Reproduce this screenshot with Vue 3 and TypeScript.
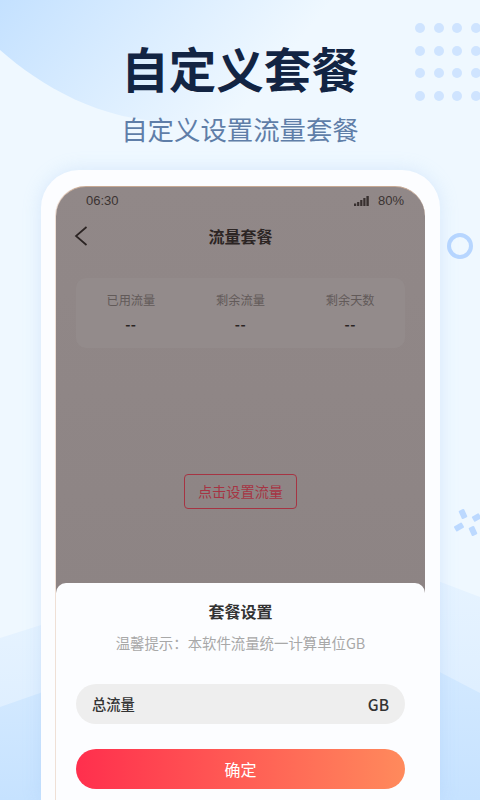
<script setup lang="ts">
const stats = [
  { label: '已用流量', value: '--' },
  { label: '剩余流量', value: '--' },
  { label: '剩余天数', value: '--' },
]
const dots = Array.from({ length: 16 }, (_, i) => i)
</script>

<template>
  <div class="page">
    <svg class="backdrop" width="480" height="800" viewBox="0 0 480 800" aria-hidden="true">
      <defs>
        <linearGradient id="arc" x1="0" y1="0" x2="1" y2="0.3">
          <stop offset="0" stop-color="#c4e1ff" />
          <stop offset="0.9" stop-color="#eff8ff" />
        </linearGradient>
        <linearGradient id="waveA" x1="0" y1="0" x2="0" y2="1">
          <stop offset="0" stop-color="#e6f3ff" />
          <stop offset="1" stop-color="#d8ebff" />
        </linearGradient>
        <linearGradient id="waveB" x1="0" y1="0" x2="0" y2="1">
          <stop offset="0" stop-color="#d3e9ff" />
          <stop offset="1" stop-color="#c6e2ff" />
        </linearGradient>
      </defs>
      <path d="M0 0 H340 C330 60 260 122 175 122 C100 122 40 85 0 50 Z" fill="url(#arc)" />
      <path d="M0 638 L60 619 V800 H0 Z" fill="url(#waveA)" />
      <path d="M0 707 L60 686 V800 H0 Z" fill="url(#waveB)" />
      <path d="M430 578 L480 597 V800 H430 Z" fill="url(#waveA)" />
      <path d="M430 667 L480 693 V800 H430 Z" fill="url(#waveB)" />
      <g fill="#bcd9ff">
        <rect x="-3" y="-4.5" width="6" height="9" rx="1" transform="translate(463 514) rotate(-25)" />
        <rect x="-4" y="-3" width="8" height="6" rx="1" transform="translate(476.500 517.500) rotate(-30)" />
        <rect x="-4.500" y="-3" width="9" height="6" rx="1" transform="translate(459 527) rotate(-30)" />
        <rect x="-3" y="-4.500" width="6" height="9" rx="1" transform="translate(473 531) rotate(-25)" />
      </g>
    </svg>

    <div class="dots" aria-hidden="true">
      <span v-for="d in dots" :key="d" class="dot"></span>
    </div>
    <span class="ring" aria-hidden="true"></span>

    <header class="hero">
      <h1 class="hero-title">自定义套餐</h1>
      <p class="hero-sub">自定义设置流量套餐</p>
    </header>

    <section class="frame">
      <div class="screen">
        <div class="statusbar">
          <span>06:30</span>
          <span class="status-right">
            <svg width="15" height="10" viewBox="0 0 15 10" aria-hidden="true">
              <g fill="#38302f">
                <rect x="0" y="7.5" width="2.2" height="2.5" />
                <rect x="3.1" y="6" width="2.2" height="4" />
                <rect x="6.2" y="4" width="2.2" height="6" />
                <rect x="9.3" y="2" width="2.2" height="8" />
                <rect x="12.4" y="0" width="2.4" height="10" />
              </g>
            </svg>
            <span>80%</span>
          </span>
        </div>

        <nav class="navbar">
          <svg class="back" width="14" height="20" viewBox="0 0 14 20" aria-hidden="true">
            <path d="M12.5 1 L2 10 L12.5 19" fill="none" stroke="#2b2423" stroke-width="1.7" />
          </svg>
          <span class="nav-title">流量套餐</span>
        </nav>

        <div class="stats">
          <div v-for="s in stats" :key="s.label" class="stat">
            <span class="stat-label">{{ s.label }}</span>
            <span class="stat-value">{{ s.value }}</span>
          </div>
        </div>

        <div class="action-wrap">
          <button class="action" type="button">点击设置流量</button>
        </div>

        <div class="sheet">
          <h2 class="sheet-title">套餐设置</h2>
          <p class="sheet-tip">温馨提示：本软件流量统一计算单位GB</p>
          <div class="field">
            <span class="field-label">总流量</span>
            <span class="unit">GB</span>
          </div>
          <button class="confirm" type="button">确定</button>
        </div>
      </div>
    </section>
  </div>
</template>

<style scoped>
.page {
  position: relative;
  width: 480px;
  height: 800px;
  overflow: hidden;
  background: #eff8ff;
  font-family: "Noto Sans CJK SC", "Noto Sans", sans-serif;
  display: flex;
  flex-direction: column;
  align-items: center;
}
.backdrop {
  position: absolute;
  left: 0;
  top: 0;
}
.dots {
  position: absolute;
  left: 415px;
  top: 23px;
  display: grid;
  grid-template-columns: repeat(4, 10px);
  column-gap: 8.7px;
  row-gap: 12.7px;
}
.dot {
  width: 10px;
  height: 10px;
  border-radius: 50%;
  background: #cfe4ff;
}
.ring {
  position: absolute;
  left: 447px;
  top: 233px;
  width: 26px;
  height: 26px;
  box-sizing: border-box;
  border: 4px solid #b7d6ff;
  border-radius: 50%;
}
.hero {
  position: relative;
  height: 170px;
  display: flex;
  flex-direction: column;
  align-items: center;
  flex: none;
}
.hero-title {
  margin: 34px 0 0;
  font-size: 47.5px;
  line-height: 68px;
  font-weight: 700;
  color: #122443;
}
.hero-sub {
  margin: 10px 0 0;
  font-size: 26.4px;
  line-height: 34px;
  font-weight: 400;
  color: #5f7ea8;
}
.frame {
  position: relative;
  flex: none;
  width: 399px;
  height: 630px;
  box-sizing: border-box;
  margin-left: 1px;
  padding: 16px 15px 0;
  background: #fcfdff;
  border-radius: 38px 38px 0 0;
  box-shadow: 0 0 18px rgba(150, 195, 240, 0.28);
}
.screen {
  height: 100%;
  display: flex;
  flex-direction: column;
  border-radius: 30px 30px 0 0;
  border-top: 1px solid #c7a994;
  box-sizing: border-box;
  box-shadow: -1px 0 0 #efe0d6;
  background: linear-gradient(180deg, #918888 0%, #8b8282 100%);
  overflow: hidden;
}
.statusbar {
  flex: none;
  height: 27px;
  padding: 0 21px 0 30px;
  display: flex;
  align-items: center;
  justify-content: space-between;
  font-family: "Liberation Sans", sans-serif;
  font-size: 13px;
  color: #3b3332;
}
.status-right {
  display: flex;
  align-items: center;
  gap: 9px;
}
.navbar {
  position: relative;
  flex: none;
  height: 46px;
  display: flex;
  align-items: center;
  justify-content: center;
}
.back {
  position: absolute;
  left: 18px;
  top: 12px;
}
.nav-title {
  margin-top: -2px;
  font-size: 16px;
  font-weight: 700;
  color: #2c2524;
}
.stats {
  flex: none;
  margin: 18px 20px 0;
  height: 70px;
  display: grid;
  grid-template-columns: repeat(3, 1fr);
  background: #938b8b;
  border-radius: 10px;
}
.stat {
  display: flex;
  flex-direction: column;
  align-items: center;
  padding-top: 12px;
}
.stat-label {
  font-size: 12.2px;
  line-height: 20px;
  color: #625a59;
}
.stat-value {
  margin-top: 4px;
  font-size: 14px;
  line-height: 20px;
  font-weight: 700;
  letter-spacing: 0.5px;
  color: #2a2423;
}
.action-wrap {
  flex: none;
  margin-top: 126px;
  display: flex;
  justify-content: center;
}
.action {
  width: 113px;
  height: 35px;
  padding: 0 0 2px;
  box-sizing: border-box;
  border: 1.3px solid #a63443;
  border-radius: 4px;
  background: transparent;
  font-family: inherit;
  font-size: 14.2px;
  color: #a63443;
}
.sheet {
  flex: 1;
  margin-top: 74px;
  padding: 0 20px;
  background: #fcfdff;
  border-radius: 10px 10px 0 0;
  display: flex;
  flex-direction: column;
  align-items: center;
}
.sheet-title {
  margin: 16px 0 0;
  font-size: 16px;
  line-height: 24px;
  font-weight: 700;
  color: #333333;
}
.sheet-tip {
  margin: 9px 0 0;
  font-size: 14.4px;
  line-height: 22px;
  color: #a8a8a8;
}
.field {
  margin-top: 30px;
  flex: none;
  width: 100%;
  height: 40px;
  box-sizing: border-box;
  padding: 0 16px;
  display: flex;
  align-items: center;
  justify-content: space-between;
  background: #eeeeee;
  border-radius: 20px;
  color: #333333;
}
.field-label {
  margin-top: -2px;
  font-size: 14.3px;
  font-weight: 500;
}
.unit {
  margin-top: -1px;
  font-size: 15.5px;
  font-weight: 500;
}
.confirm {
  margin-top: 25px;
  flex: none;
  width: 100%;
  height: 40px;
  padding: 0;
  border: 0;
  border-radius: 20px;
  background: linear-gradient(90deg, #ff2f4d 0%, #ff8a5c 100%);
  font-family: inherit;
  font-size: 16px;
  color: #ffffff;
}
</style>
